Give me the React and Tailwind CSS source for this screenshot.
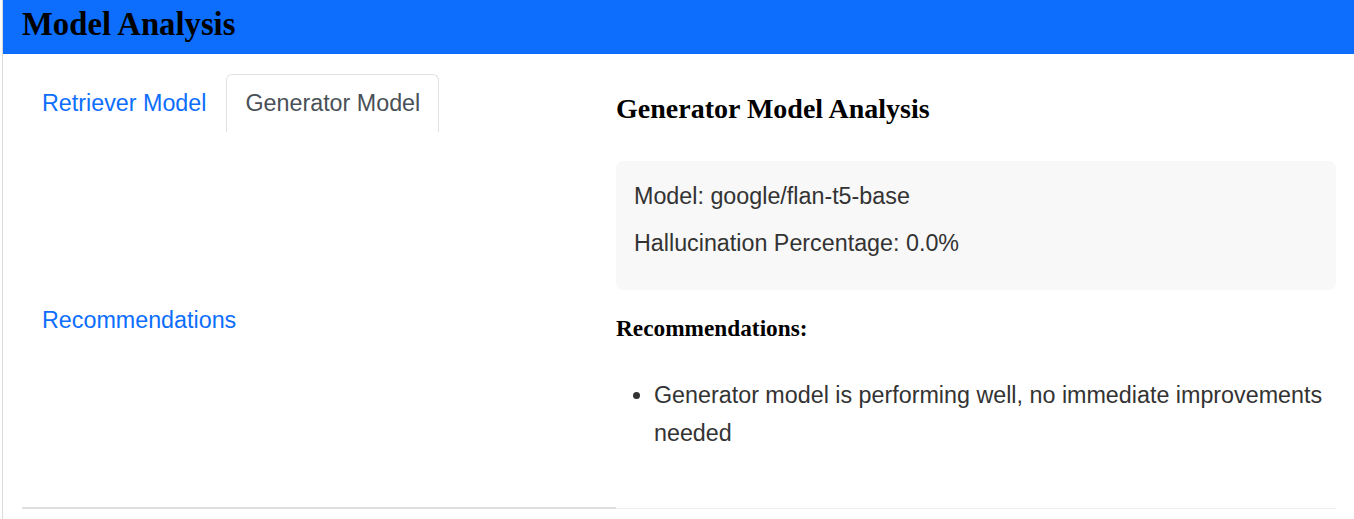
export default function App() {
  const sans = { fontFamily: '"Liberation Sans", Arial, sans-serif' };
  const serif = { fontFamily: '"Liberation Serif", "Times New Roman", serif' };
  return (
    <div className="min-h-[519px] bg-white ml-[2px] border-l border-[#dadada]" style={sans}>
      <header className="bg-[#0d6efd] h-[54px] flex items-center pl-[19px] pb-[5px]">
        <h1 className="text-[32.7px] font-bold text-black leading-[37px]" style={serif}>
          Model Analysis
        </h1>
      </header>
      <main className="flex pl-[19px] pr-[18px] pt-[20px]">
        <div className="w-[594px] h-[435px] border-b-2 border-[#e0e0e0] grid grid-rows-2">
          <div className="flex items-start">
            <button className="pl-[19px] pr-[19px] py-[11px] text-[23.3px] leading-[35px] text-[#0d6efd] border border-transparent">
              Retriever Model
            </button>
            <button className="px-[18px] py-[11px] text-[23.3px] leading-[35px] text-[#495057] bg-white border border-b-0 border-[#dee2e6] rounded-t-[6px]">
              Generator Model
            </button>
          </div>
          <div className="flex items-start">
            <button className="pl-[19px] pr-[19px] py-[11px] text-[23.3px] leading-[35px] text-[#0d6efd] border border-transparent">
              Recommendations
            </button>
          </div>
        </div>
        <div className="flex-1 h-[435px] border-b border-[#ececec] text-[#333333]">
          <h3 className="mt-[19px] text-[28px] leading-[32px] font-bold text-black" style={serif}>
            Generator Model Analysis
          </h3>
          <div className="mt-[36px] bg-[#f8f8f8] rounded-[8px] pl-[18px] pr-[18px] pt-[18px] pb-[29px] text-[23.3px] leading-[34.5px]">
            <p>Model: google/flan-t5-base</p>
            <p className="mt-[12.5px]">Hallucination Percentage: 0.0%</p>
          </div>
          <h4 className="mt-[25px] text-[23.3px] leading-[26px] font-bold text-black" style={serif}>
            Recommendations:
          </h4>
          <ul className="mt-[35px] pl-[38px] list-disc text-[23.3px] leading-[38px]">
            <li>Generator model is performing well, no immediate improvements needed</li>
          </ul>
        </div>
      </main>
    </div>
  );
}
